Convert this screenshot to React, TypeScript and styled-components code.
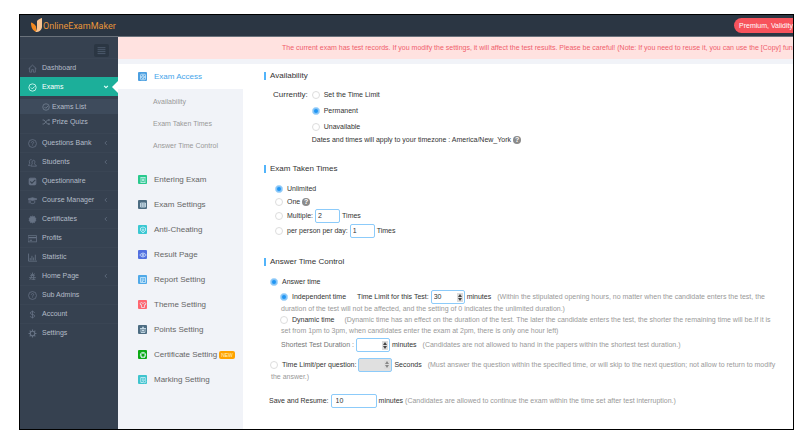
import React from "react";
import styled, { createGlobalStyle, css } from "styled-components";

const Global = createGlobalStyle`
  *, *::before, *::after { box-sizing: border-box; }
  body {
    margin: 0;
    background: #fff;
    color: #333;
    font-family: "Liberation Sans", Arial, sans-serif;
    font-size: 7px;
    line-height: 10px;
  }
  button, input { font: inherit; color: inherit; margin: 0; }
  a { color: inherit; text-decoration: none; }
`;

const Frame = styled.div`
  display: flex;
  flex-direction: column;
  min-height: calc(100vh - 26px);
  margin: 14px 9px 12px 19px;
  border: 1px solid #000;
  overflow: hidden;
`;

const Header = styled.header`
  display: flex;
  align-items: center;
  justify-content: space-between;
  height: 22px;
  padding-left: 11px;
  background: #2b3643;
  border-bottom: 1px solid #6a727b;
`;

const Brand = styled.a`
  display: flex;
  align-items: center;
  color: #e8953a;
  font-family: Roboto, "Noto Sans", sans-serif;
  font-size: 9px;
  line-height: 14px;
`;

const Plan = styled.button`
  height: 15px;
  padding: 0 0 0 5px;
  border: 0;
  border-radius: 8px 0 0 8px;
  background: #f7535c;
  color: #fff;
  white-space: nowrap;
`;

const Body = styled.div`
  display: flex;
  flex: 1;
  background: #f1f3f8;
`;

const Sidebar = styled.nav`
  display: flex;
  flex-direction: column;
  flex: 0 0 98px;
  background: #364150;
  color: #b4bcc8;
`;

const Burger = styled.button`
  display: flex;
  align-items: center;
  justify-content: center;
  align-self: flex-end;
  width: 15px;
  height: 13px;
  margin: 7px 9px 1px;
  padding: 0;
  border: 0;
  border-radius: 2px;
  background: #2b3643;
  color: #566476;
`;

const NavLink = styled.a<{ $active?: boolean }>`
  display: flex;
  align-items: center;
  gap: 5px;
  height: 19px;
  padding: 0 9px 0 8px;
  border-top: 1px solid #3a4554;
  color: ${(p) => (p.$active ? "#fff" : "#b4bcc8")};
  position: relative;
  > svg { color: ${(p) => (p.$active ? "#e4fffa" : "#667284")}; }
  > span + svg { margin-left: auto; }
  ${(p) =>
    p.$active &&
    css`
      background: #1caf9a;
      border-color: #1caf9a;
      &::after {
        content: "";
        position: absolute;
        right: 0;
        top: 3px;
        border: 6px solid transparent;
        border-right-color: #fff;
        border-left-width: 0;
      }
    `}
`;

const SubNav = styled.div`
  padding: 3px 0 4px;
`;

const SubLink = styled.a<{ $active?: boolean }>`
  display: flex;
  align-items: center;
  gap: 2px;
  height: 15px;
  padding-left: 22px;
  background: ${(p) => (p.$active ? "#3e4b5c" : "transparent")};
  svg { color: #7b889a; }
`;

const Workspace = styled.div`
  display: flex;
  flex-direction: column;
  flex: 1;
  min-width: 0;
`;

const Alert = styled.div`
  flex: none;
  padding: 6px 0 6px 164px;
  background: #ffe2e0;
  color: #f0606c;
  white-space: nowrap;
`;

const Columns = styled.div`
  display: flex;
  flex: 1;
  padding-top: 5px;
`;

const Steps = styled.nav`
  display: flex;
  flex-direction: column;
  flex: 0 0 125px;
  color: #666;
`;

const Step = styled.a<{ $active?: boolean }>`
  display: flex;
  align-items: center;
  gap: 7px;
  height: 25px;
  padding-left: 20px;
  font-size: 8px;
  white-space: nowrap;
  ${(p) =>
    p.$active &&
    css`
      background: #fff;
      color: #45a5ea;
    `}
`;

const SubSteps = styled.div`
  display: flex;
  flex-direction: column;
  padding: 2px 0 10px 35px;
  color: #999;
  a { line-height: 22px; }
`;

const NewBadge = styled.span`
  margin-left: -5px;
  padding: 0 2px;
  border-radius: 2px;
  background: #ffa200;
  color: #fff3c8;
  font-size: 5px;
  line-height: 8px;
`;

const Main = styled.main`
  flex: 1;
  min-width: 0;
  background: #fff;
`;

const Section = styled.section`
  padding: 7px 8px 12px 21px;
`;

const Title = styled.h2`
  display: flex;
  align-items: center;
  gap: 4px;
  margin: 0;
  font-size: 8px;
  font-weight: 400;
  line-height: 10px;
  &::before {
    content: "";
    width: 2px;
    height: 8px;
    background: #52b4fa;
  }
`;

const Choices = styled.div<{ $indent: number }>`
  display: flex;
  flex-direction: column;
  padding: 8px 0 0 ${(p) => p.$indent}px;
`;

const Currently = styled.div`
  display: flex;
  gap: 4px;
  padding: 6px 0 1px 9px;
  line-height: 16px;
  > span { font-size: 8px; }
`;

const Line = styled.div<{ $h: number; $in?: number }>`
  display: flex;
  align-items: center;
  height: ${(p) => p.$h}px;
  padding-left: ${(p) => p.$in ?? 0}px;
  white-space: nowrap;
`;

const SaveLine = styled(Line)`
  margin: 11px 0 0 -1px;
`;

const Label = styled.label`
  display: inline-flex;
  align-items: center;
  gap: 4px;
`;

const TimeLabel = styled.label<{ $soft?: boolean }>`
  margin-left: ${(p) => (p.$soft ? 0 : 11)}px;
  color: ${(p) => (p.$soft ? "#777" : "#333")};
`;

const Radio = styled.input.attrs({ type: "radio" })`
  appearance: none;
  flex: none;
  width: 8px;
  height: 8px;
  border: 1px solid #ddd;
  border-radius: 50%;
  background: #fff;
  &:checked {
    border-color: #b5dcfb;
    background: #2196f3;
    box-shadow: inset 0 0 0 1px #84c4f8;
  }
`;

const Field = styled.span<{ $w: number; $disabled?: boolean }>`
  display: inline-flex;
  align-items: center;
  width: ${(p) => p.$w}px;
  height: 14px;
  margin: 0 2px;
  padding-right: 1px;
  border: 1px solid #8ccbfa;
  border-radius: 2px;
  background: ${(p) => (p.$disabled ? "#e0e0e0" : "#fff")};
`;

const TextInput = styled.input<{ $pad?: number }>`
  flex: 1;
  min-width: 0;
  width: 100%;
  padding: 0 0 0 ${(p) => p.$pad ?? 2}px;
  border: 0;
  outline: 0;
  background: transparent;
  line-height: 10px;
  appearance: textfield;
  &::-webkit-inner-spin-button { display: none; }
`;

const Hint = styled.span<{ $gap?: number }>`
  margin-left: ${(p) => p.$gap ?? 0}px;
  color: #999;
`;

const HelpDot = styled.button`
  width: 8px;
  height: 8px;
  margin-left: 2px;
  padding: 0;
  border: 0;
  border-radius: 50%;
  background: #8b8b8b;
  color: #fff;
  font-size: 7px;
  font-weight: 700;
  line-height: 8px;
`;

const glyphs: Record<string, React.ReactNode> = {
  home: <path d="M1 8.500 8 2l7 6.500M3 7v7.500h3.500V10h3v4.500H13V7" />,
  check: <><circle cx="8" cy="8" r="6.500" /><path d="m5 8 2.500 2.500L12 6" /></>,
  shuffle: <path d="M1 4h3l7 8h4M1 12h3l7-8h4M13 2l2 2-2 2M13 10l2 2-2 2" />,
  help: <><circle cx="8" cy="8" r="7" /><path d="M6 6.500C6 3.500 10.500 4 10 6.500 9.500 8 8 8 8 10M8 11.500v1" /></>,
  users: <><path d="M4 13.500H1c0-2 2-2 2-4C1 5 4 2 6.500 3" /><path d="M5 14.500h10c0-3-3.500-2-3.500-4.500 3.500-8-6.500-8-4 0 .500 2.500-2.500 1.500-2.500 4.500Z" /></>,
  survey: <><rect x="2" y="2" width="12" height="12" rx="2" fill="currentColor" /><path d="m4 8 3 3 6-6" stroke="#364150" strokeWidth="2" /></>,
  cap: <><path d="M0 5.500 8 3l8 2.500L8 8Z" fill="currentColor" /><path d="M4 8v4c2 2 6 2 8 0V8M2 6.500V13" /></>,
  cert: <path d="m8 2 1.500 1 2-.500.500 2L14 6l-.500 2 .500 2-2 1.500-.500 2-2-.500L8 14l-1.500-1-2 .500-.500-2L2 10l.500-2L2 6l2-1.500.500-2 2 .500Z" fill="currentColor" />,
  card: <><rect x="0" y="3" width="15" height="11" /><path d="M1 6.500h14M3 11h4" strokeWidth="2" /></>,
  chart: <path d="M1 1v13.500h15M4 13V9M7 13V5M10 13V8M13 13V3" strokeWidth="1.500" />,
  tree: <path d="M8 1v5M5 3l3 3 4-3M4 6h8M2 10h12M6 6v4l-3 4M10 6v8M6 13h7" strokeWidth="1.500" />,
  dollar: <path d="M12 5C11 2 4 2 4 5.500S12 7 12 10.500 4 14 4 11M8 1v14" />,
  gear: <><circle cx="8" cy="8" r="4" strokeWidth="2" /><path d="M8 1v3M8 12v3M1 8h3M12 8h3M3 3l2 2M11 11l2 2M3 13l2-2M11 5l2-2" strokeWidth="2" /></>,
  menu: <path d="M1 3h14M1 6.500h14M1 10h14M1 13.500h14" />,
  left: <path d="m10 3-5 5 5 5" strokeWidth="2" />,
  down: <path d="m3 5 5 5 5-5" strokeWidth="3" />,
  access: <><rect x="3" y="2.500" width="10" height="11" rx="2" /><circle cx="8" cy="8" r="3" /><path d="M8 6v2l1.500 1.500" /></>,
  entering: <path d="M3 3h10M3 13h10M6 6h4M6 8.500h4M4 3v10M12 3v10M8 6v5" />,
  grid: <path d="M3 4h10v8H3ZM3 8h10M6.500 4v8M10 4v8" />,
  shield: <><path d="m8 2 5 2v5l-5 5-5-5V4Z" /><circle cx="8" cy="8" r="2" /></>,
  eye: <><path d="M1.500 8C5 3 11 3 14.500 8 11 13 5 13 1.500 8Z" /><circle cx="8" cy="8" r="2" /></>,
  report: <path d="M3 3h10v10H3ZM5 6h6M5 8.500h6M5 11h3" />,
  shirt: <path d="m5 3-3 2 1.500 3L5 7.500V13h6V7.500l1.500.500L14 5l-3-2c-1 2-5 2-6 0Z" />,
  points: <path d="M2 5h12M4 5v8h8V5M8 2.500V13M6 9h4M6 2.500h4" />,
  award: <><circle cx="8" cy="8" r="5.500" /><path d="m8 3 2 3 3 1-2 3v3l-3-1.500L5 13v-3L3 7l3-1Z" /></>,
  marking: <><path d="M3.500 3h9v5M3.500 3v10H8M6 6h4M6 8.500h2" /><circle cx="11" cy="11" r="2.500" /></>,
};

function Icon({ name, size = 9 }: { name: string; size?: number }) {
  return (
    <svg width={size} height={size} viewBox="0 0 16 16" fill="none" stroke="currentColor" strokeWidth="1.400" aria-hidden="true">
      {glyphs[name]}
    </svg>
  );
}

const Tile = styled.span<{ $color: string }>`
  display: flex;
  align-items: center;
  justify-content: center;
  width: 9px;
  height: 9px;
  border-radius: 1px;
  background: ${(p) => p.$color};
  color: #e4f5ff;
`;

const nav: [string, string, boolean][] = [
  ["help", "Questions Bank", true],
  ["users", "Students", true],
  ["survey", "Questionnaire", false],
  ["cap", "Course Manager", true],
  ["cert", "Certificates", true],
  ["card", "Profits", false],
  ["chart", "Statistic", false],
  ["tree", "Home Page", true],
  ["help", "Sub Admins", false],
  ["dollar", "Account", false],
  ["gear", "Settings", false],
];

const steps: [string, string, string][] = [
  ["entering", "Entering Exam", "#29c98d"],
  ["grid", "Exam Settings", "#4d6c82"],
  ["shield", "Anti-Cheating", "#3bc8d2"],
  ["eye", "Result Page", "#526fe0"],
  ["report", "Report Setting", "#50a9e8"],
  ["shirt", "Theme Setting", "#ff6670"],
  ["points", "Points Setting", "#4d6c82"],
  ["award", "Certificate Setting", "#0caa14"],
  ["marking", "Marking Setting", "#3fc4ce"],
];

function Stepper({ id, value, disabled }: { id: string; value?: number; disabled?: boolean }) {
  return (
    <Field $w={34} $disabled={disabled}>
      <TextInput id={id} type="number" defaultValue={value} disabled={disabled} />
      <svg width="6" height="9" viewBox="0 0 6 9" aria-hidden="true">
        <rect width="6" height="9" fill="#dcdcdc" />
        <path d="M1 4 3 1l2 3ZM1 5l2 3 2-3Z" fill={disabled ? "#888" : "#444"} />
      </svg>
    </Field>
  );
}

function Option({ group, text, on }: { group: string; text: string; on?: boolean }) {
  return (
    <Label>
      <Radio name={group} defaultChecked={on} />
      {text}
    </Label>
  );
}

export default function App() {
  return (
    <>
      <Global />
      <Frame>
        <Header>
          <Brand href="#">
            <svg width="12" height="15" viewBox="0 0 24 30" aria-hidden="true">
              <path d="M0 9c4 1 8 4 10 8l1 11C4 26 0 20 0 9Z" fill="#f58a1f" />
              <path d="M12 6c2-3 6-5 10-6v17c0 7-5 11-13 11 3-4 3-8 3-13Z" fill="#fbc591" />
            </svg>
            OnlineExamMaker
          </Brand>
          <Plan>Premium, Validity</Plan>
        </Header>
        <Body>
          <Sidebar>
            <Burger aria-label="Toggle menu"><Icon name="menu" size={9} /></Burger>
            <NavLink href="#"><Icon name="home" /><span>Dashboard</span></NavLink>
            <NavLink href="#" $active><Icon name="check" /><span>Exams</span><Icon name="down" size={6} /></NavLink>
            <SubNav>
              <SubLink href="#" $active><Icon name="check" size={8} />Exams List</SubLink>
              <SubLink href="#"><Icon name="shuffle" size={8} />Prize Quizs</SubLink>
            </SubNav>
            {nav.map(([icon, text, more]) => (
              <NavLink href="#" key={text}>
                <Icon name={icon} />
                <span>{text}</span>
                {more && <Icon name="left" size={6} />}
              </NavLink>
            ))}
          </Sidebar>
          <Workspace>
            <Alert role="alert">
              The current exam has test records. If you modify the settings, it will affect the test results. Please be careful! (Note: If you need to reuse it, you can use the [Copy] fun
            </Alert>
            <Columns>
              <Steps>
                <Step href="#" $active><Tile $color="#4c9fe0"><Icon name="access" size={8} /></Tile>Exam Access</Step>
                <SubSteps>
                  <a href="#">Availability</a>
                  <a href="#">Exam Taken Times</a>
                  <a href="#">Answer Time Control</a>
                </SubSteps>
                {steps.map(([icon, text, color]) => (
                  <Step href="#" key={text}>
                    <Tile $color={color}><Icon name={icon} size={8} /></Tile>
                    {text}
                    {icon === "award" && <NewBadge>NEW</NewBadge>}
                  </Step>
                ))}
              </Steps>
              <Main>
                <Section>
                  <Title>Availability</Title>
                  <Currently>
                    <span>Currently:</span>
                    <div>
                      <Line $h={16}><Option group="availability" text="Set the Time Limit" /></Line>
                      <Line $h={16}><Option group="availability" text="Permanent" on /></Line>
                      <Line $h={16}><Option group="availability" text="Unavailable" /></Line>
                      <Line $h={9}>
                        Dates and times will apply to your timezone : America/New_York
                        <HelpDot aria-label="Help">?</HelpDot>
                      </Line>
                    </div>
                  </Currently>
                </Section>
                <Section>
                  <Title>Exam Taken Times</Title>
                  <Choices $indent={11}>
                    <Line $h={13}><Option group="taken" text="Unlimited" on /></Line>
                    <Line $h={13}><Option group="taken" text="One" /><HelpDot aria-label="Help">?</HelpDot></Line>
                    <Line $h={15}>
                      <Option group="taken" text="Multiple:" />
                      <Field $w={25}><TextInput defaultValue="2" aria-label="Multiple times" /></Field>Times
                    </Line>
                    <Line $h={15}>
                      <Option group="taken" text="per person per day:" />
                      <Field $w={25}><TextInput defaultValue="1" aria-label="Times per person per day" /></Field>Times
                    </Line>
                  </Choices>
                </Section>
                <Section>
                  <Title>Answer Time Control</Title>
                  <Choices $indent={6}>
                    <Line $h={14}><Option group="control" text="Answer time" on /></Line>
                    <Line $h={16} $in={10}>
                      <Option group="mode" text="Independent time" on />
                      <TimeLabel htmlFor="limit">Time Limit for this Test:</TimeLabel>
                      <Stepper id="limit" value={30} />
                      minutes
                      <Hint $gap={6}>(Within the stipulated opening hours, no matter when the candidate enters the test, the</Hint>
                    </Line>
                    <Line $h={8} $in={11}><Hint>duration of the test will not be affected, and the setting of 0 indicates the unlimited duration.)</Hint></Line>
                    <Line $h={14} $in={10}>
                      <Option group="mode" text="Dynamic time" />
                      <Hint $gap={10}>(Dynamic time has an effect on the duration of the test. The later the candidate enters the test, the shorter the remaining time will be.If it is</Hint>
                    </Line>
                    <Line $h={8} $in={11}><Hint>set from 1pm to 3pm, when candidates enter the exam at 2pm, there is only one hour left)</Hint></Line>
                    <Line $h={20} $in={11}>
                      <TimeLabel $soft htmlFor="shortest">Shortest Test Duration :</TimeLabel>
                      <Stepper id="shortest" />
                      minutes
                      <Hint $gap={6}>(Candidates are not allowed to hand in the papers within the shortest test duration.)</Hint>
                    </Line>
                    <Line $h={19}>
                      <Option group="control" text="Time Limit/per question:" />
                      <Stepper id="per-question" disabled />
                      <label htmlFor="per-question">Seconds</label>
                      <Hint $gap={6}>(Must answer the question within the specified time, or will skip to the next question; not allow to return to modify</Hint>
                    </Line>
                    <Line $h={6} $in={1}><Hint>the answer.)</Hint></Line>
                    <SaveLine $h={20}>
                      <label htmlFor="resume">Save and Resume:</label>
                      <Field $w={46}><TextInput id="resume" $pad={4} defaultValue="10" /></Field>
                      minutes
                      <Hint $gap={2}>(Candidates are allowed to continue the exam within the time set after test interruption.)</Hint>
                    </SaveLine>
                  </Choices>
                </Section>
              </Main>
            </Columns>
          </Workspace>
        </Body>
      </Frame>
    </>
  );
}
